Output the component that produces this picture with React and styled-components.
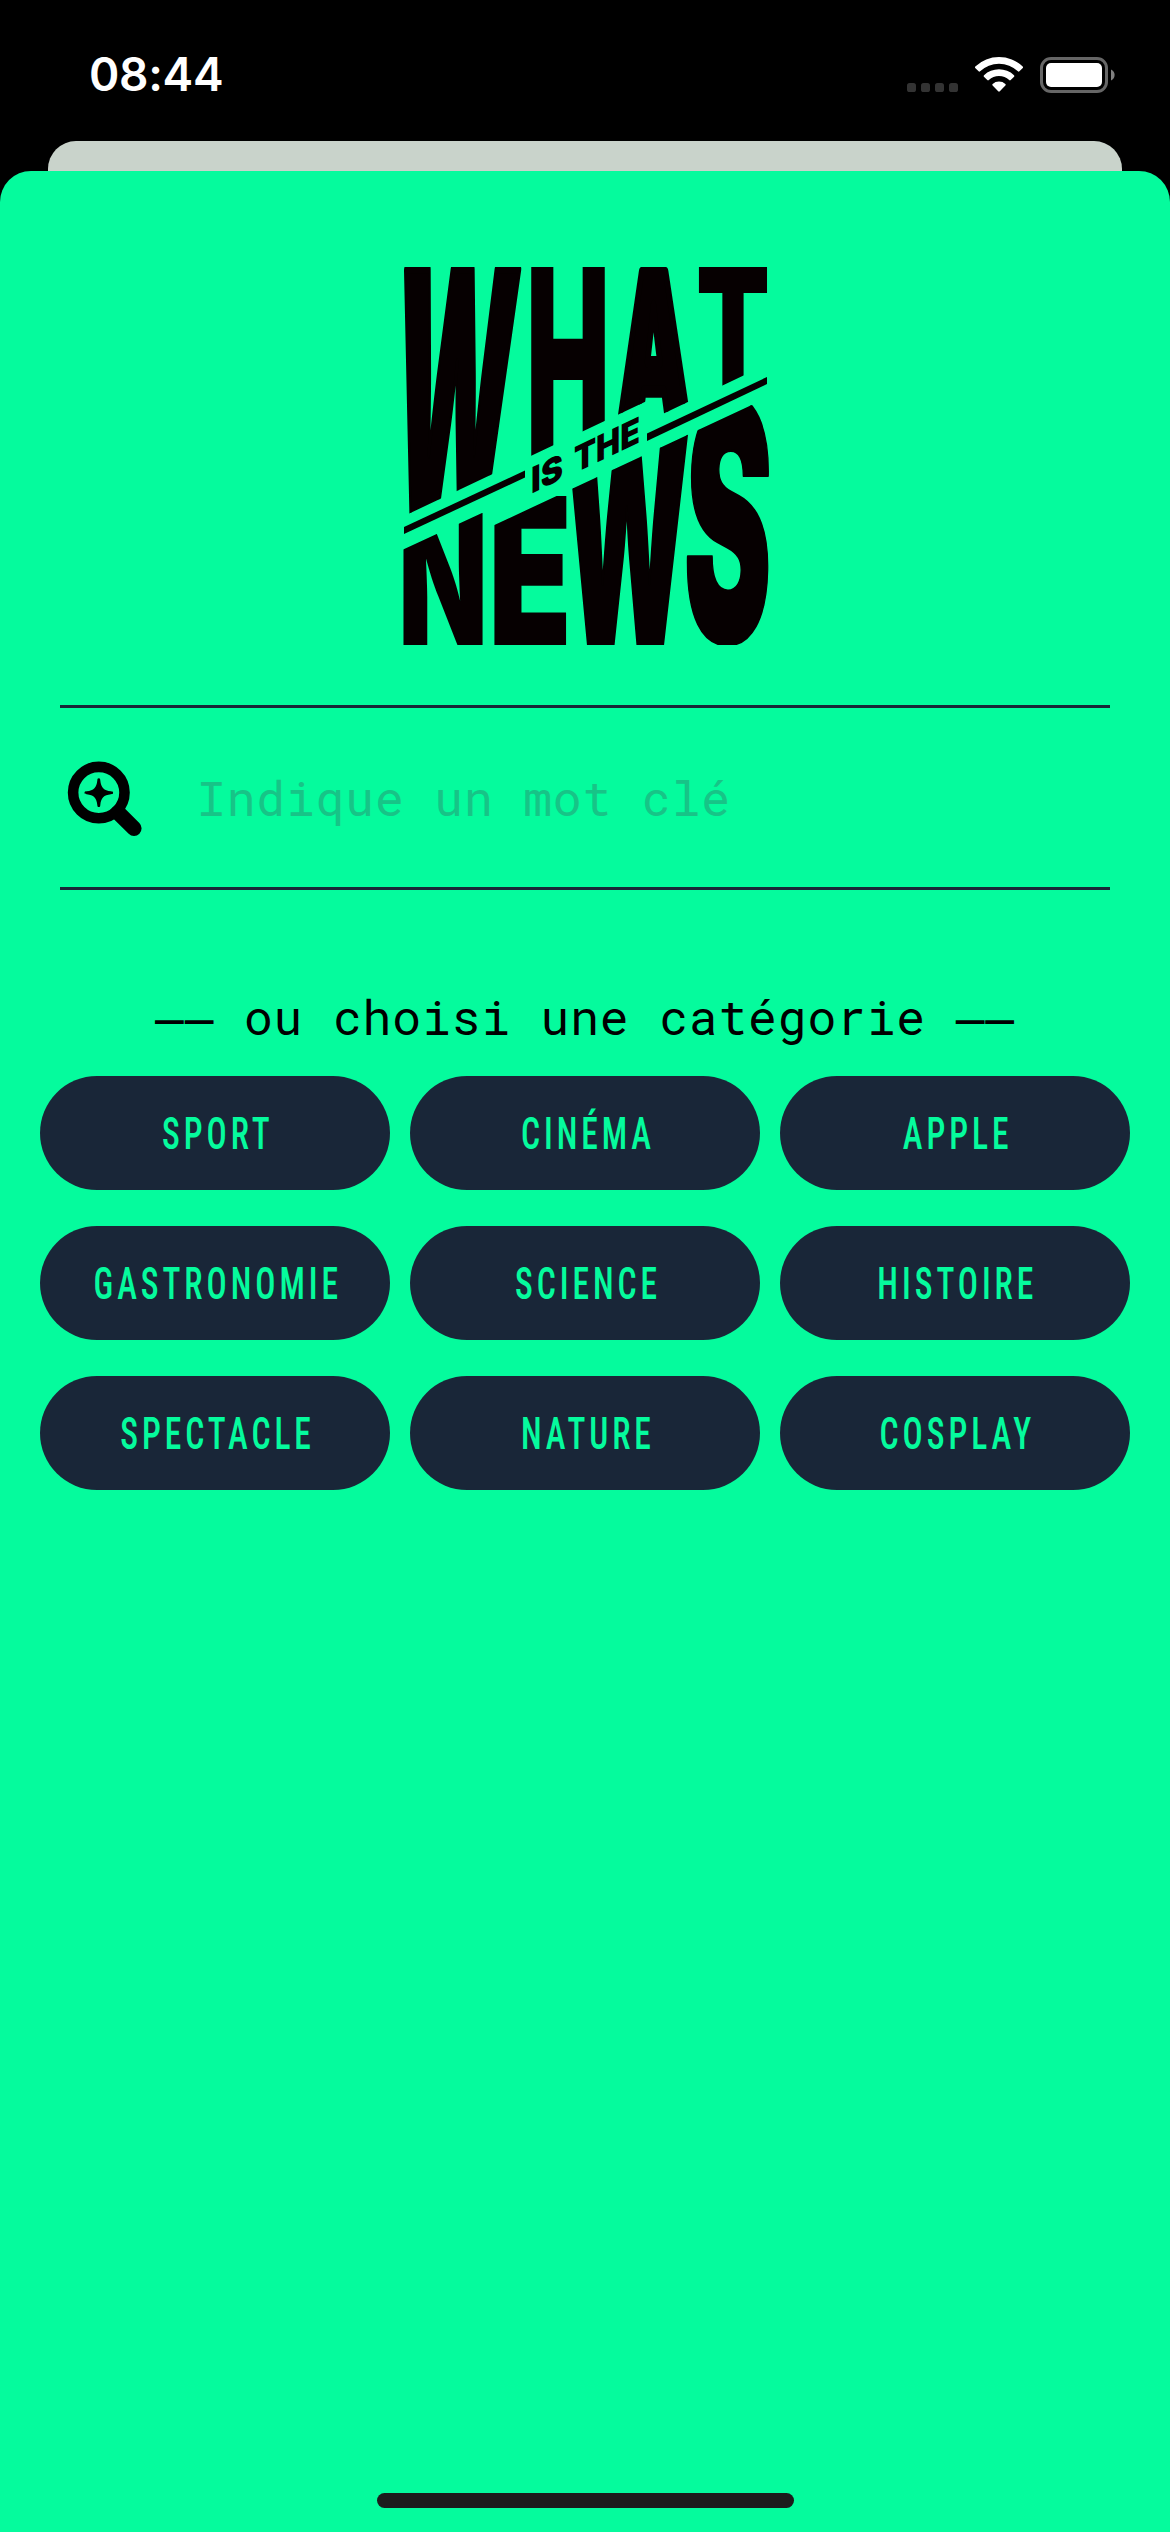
import React from "react";
import styled, { createGlobalStyle } from "styled-components";

const mint = "#05fb9d";
const navy = "#192638";
const ink = "#060001";

const GlobalStyle = createGlobalStyle`
  *, *::before, *::after { box-sizing: border-box; }
  body { margin: 0; background: #000; }
`;

const Screen = styled.div`
  display: flex;
  flex-direction: column;
  width: 1170px;
  height: 2532px;
  overflow: hidden;
  background: #000;
`;

const StatusBar = styled.header`
  display: flex;
  align-items: center;
  justify-content: space-between;
  height: 141px;
  padding: 7px 55px 0 89px;
`;

const Clock = styled.time`
  font: 600 46px/60px Inter, sans-serif;
  letter-spacing: -0.3px;
  color: #fff;
`;

const StatusIcons = styled.div`
  display: flex;
  align-items: center;
`;

const PreviousSheet = styled.div`
  height: 30px;
  margin: 0 48px;
  border-radius: 28px 28px 0 0;
  background: #c9d3cb;
`;

const Sheet = styled.main`
  display: flex;
  flex: 1;
  flex-direction: column;
  padding: 96px 40px 24px;
  border-radius: 31px 31px 0 0;
  background: ${mint};
`;

const Logo = styled.svg`
  display: block;
  align-self: center;
  width: 370px;
  height: 380px;
  margin-left: 1px;
  fill: ${ink};
  font-family: Inter, "Liberation Sans", sans-serif;
  font-weight: 900;
`;

const SearchBar = styled.label`
  display: flex;
  align-items: center;
  gap: 54px;
  height: 185px;
  margin: 58px 20px 0;
  padding: 0 0 0 7px;
  border-top: 3px solid ${navy};
  border-bottom: 3px solid ${navy};
`;

const SearchInput = styled.input`
  flex: 1;
  min-width: 0;
  padding: 0;
  border: 0;
  outline: 0;
  background: transparent;
  font: 400 48px/70px "Roboto Mono", "Liberation Mono", monospace;
  letter-spacing: 0.85px;
  color: ${navy};

  &::placeholder {
    color: #17c487;
    opacity: 1;
  }
`;

const Divider = styled.p`
  display: flex;
  justify-content: center;
  margin: 92px 0 0;
  font: 400 48px/70px "Roboto Mono", "Liberation Mono", monospace;
  letter-spacing: 0.85px;
  white-space: pre;
  color: #000;
`;

const Dash = styled.span`
  font-family: "Noto Sans Mono", "Liberation Mono", monospace;
`;

const Categories = styled.div`
  display: grid;
  grid-template-columns: repeat(3, 350px);
  gap: 36px 20px;
  margin-top: 24px;
`;

const Category = styled.button`
  display: flex;
  align-items: center;
  justify-content: center;
  height: 114px;
  padding: 0;
  border: 0;
  border-radius: 57px;
  background: ${navy};
  color: ${mint};
  font: 480 45px/60px "Roboto Condensed", Roboto, sans-serif;
  letter-spacing: 5.3px;
`;

const CategoryName = styled.span`
  margin-right: -5.3px;
  padding-top: 1px;
  transform: scaleX(0.745);
  white-space: nowrap;
`;

const HomeBar = styled.div`
  align-self: center;
  width: 417px;
  height: 15px;
  margin-top: auto;
  border-radius: 8px;
  background: #1c1c1c;
`;

const whatLetters = [
  { char: "W", x: 387, width: 120, base: 530, height: 260, skew: -0.06, stroke: 7 },
  { char: "H", x: 526, width: 84, base: 456, height: 189 },
  { char: "A", x: 618, width: 72, base: 420, height: 147, stroke: 12 },
  { char: "T", x: 696, width: 74, base: 386, height: 119 },
];

const newsLetters = [
  { char: "N", x: 398, width: 90, base: 644.5, height: 132 },
  { char: "E", x: 488, width: 84, base: 644.5, height: 149 },
  { char: "W", x: 563, width: 125, base: 646, height: 214, skew: -0.01, stroke: 4 },
  { char: "S", x: 682, width: 88, base: 642, height: 242, skew: -0.02, stroke: 3 },
];

function LogoLetter({ char, x, width, base, height, skew = 0, stroke = 0 }) {
  return (
    <text
      transform={`matrix(1 0 ${skew} 1 ${x} ${base})`}
      fontSize={height / 0.727}
      textLength={width}
      lengthAdjust="spacingAndGlyphs"
      stroke={ink}
      strokeWidth={stroke}
      strokeLinejoin="round"
    >
      {char}
    </text>
  );
}

function BrandLogo() {
  return (
    <Logo viewBox="401 267 370 380" role="img" aria-label="What is the news">
      <clipPath id="above">
        <polygon points="404,267 775,267 775,360.6 650,420 650,399.4 404,516" />
      </clipPath>
      <clipPath id="below">
        <polygon points="401,550.4 482,513 488,510 488,528 775,394 775,645 401,645" />
      </clipPath>
      <g clipPath="url(#above)">
        {whatLetters.map((l) => <LogoLetter key={l.char} {...l} />)}
      </g>
      <polygon points="404,527 525,470.5 525,477.5 404,534" />
      <polygon points="647,433.5 767,377 767,384 647,441" />
      <g transform="matrix(1 -0.477 0 1 531 494)" fontSize="36">
        <text textLength="32" lengthAdjust="spacingAndGlyphs">IS</text>
        <text x="43" textLength="66" lengthAdjust="spacingAndGlyphs">THE</text>
      </g>
      <g clipPath="url(#below)">
        {newsLetters.map((l) => <LogoLetter key={l.char} {...l} />)}
      </g>
    </Logo>
  );
}

function SignalWifiBattery() {
  return (
    <svg width="208" height="37" viewBox="907 55 208 37" fill="#fff">
      <g fill="#333">
        <rect x="907" y="82" width="9" height="9" rx="2.6" />
        <rect x="921" y="82" width="9" height="9" rx="2.6" />
        <rect x="935" y="82" width="9" height="9" rx="2.6" />
        <rect x="949" y="82" width="9" height="9" rx="2.6" />
      </g>
      <path d="M975.3 65.4a34.5 34.5 0 0 1 47.4 0c.5.5.5 1 .1 1.5l-3.4 3.4c-.5.5-1 .5-1.5 0a27.4 27.4 0 0 0-37.8 0c-.5.5-1 .5-1.5 0l-3.4-3.4c-.4-.5-.4-1 .1-1.5z" />
      <path d="M984 74.2a22 22 0 0 1 30 0c.5.5.5 1 .1 1.5l-3.4 3.4c-.5.5-1 .5-1.5 0a15 15 0 0 0-20.4 0c-.5.5-1 .5-1.5 0l-3.4-3.4c-.4-.5-.4-1 .1-1.5z" />
      <path d="M992.6 83a9.6 9.6 0 0 1 12.8 0c.5.5.5 1 0 1.5l-5.6 5.8c-.5.5-1.1.5-1.6 0l-5.6-5.8c-.5-.5-.5-1 0-1.5z" />
      <rect x="1041.5" y="57.5" width="65" height="33" rx="9.5" fill="none" stroke="#666" strokeWidth="3" />
      <rect x="1046" y="62" width="56" height="24" rx="5" />
      <path fill="#808080" d="M1111 68.5a6 6 0 0 1 0 11z" />
    </svg>
  );
}

function SearchSparkIcon() {
  return (
    <svg width="76" height="76" viewBox="67 760 76 76">
      <circle cx="98.8" cy="792.6" r="25.7" fill="none" stroke="#000" strokeWidth="10.6" />
      <path d="M118 812.5 134 828.3" stroke="#000" strokeWidth="15.2" strokeLinecap="round" />
      <path d="M98.8 778.2c1.3 0 1.3.9 1.5 2.2.7 7.2 3.5 10 10.6 10.8 1.4.2 2.2.2 2.2 1.5s-.8 1.3-2.2 1.5c-7.1.8-9.9 3.6-10.6 10.7-.2 1.4-.2 2.2-1.5 2.2s-1.3-.8-1.5-2.2c-.7-7.1-3.5-9.9-10.6-10.7-1.4-.2-2.2-.2-2.2-1.5s.8-1.3 2.2-1.5c7.1-.8 9.9-3.6 10.6-10.8.2-1.3.2-2.2 1.5-2.2z" />
    </svg>
  );
}

const categories = ["SPORT", "CINÉMA", "APPLE", "GASTRONOMIE", "SCIENCE", "HISTOIRE", "SPECTACLE", "NATURE", "COSPLAY"];

export default function App() {
  return (
    <Screen>
      <GlobalStyle />
      <StatusBar>
        <Clock>08:44</Clock>
        <StatusIcons>
          <SignalWifiBattery />
        </StatusIcons>
      </StatusBar>
      <PreviousSheet />
      <Sheet>
        <BrandLogo />
        <SearchBar>
          <SearchSparkIcon />
          <SearchInput placeholder="Indique un mot clé" />
        </SearchBar>
        <Divider>
          <Dash>——</Dash> ou choisi une catégorie <Dash>——</Dash>
        </Divider>
        <Categories>
          {categories.map((name) => (
            <Category key={name}>
              <CategoryName>{name}</CategoryName>
            </Category>
          ))}
        </Categories>
        <HomeBar />
      </Sheet>
    </Screen>
  );
}
